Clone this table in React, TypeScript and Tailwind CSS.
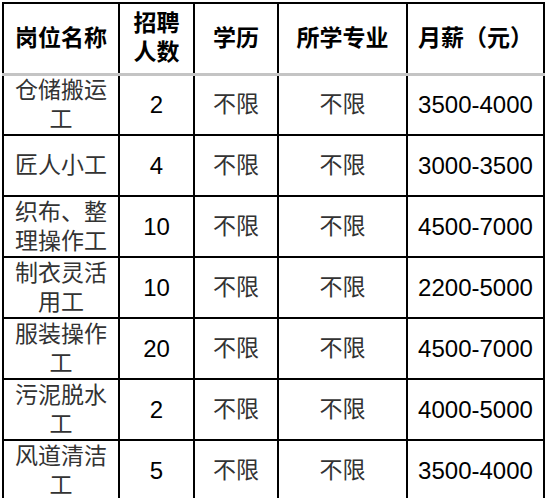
const rows = [
  { name: "仓储搬运工", count: "2", salary: "3500-4000" },
  { name: "匠人小工", count: "4", salary: "3000-3500" },
  { name: "织布、整理操作工", count: "10", salary: "4500-7000" },
  { name: "制衣灵活用工", count: "10", salary: "2200-5000" },
  { name: "服装操作工", count: "20", salary: "4500-7000" },
  { name: "污泥脱水工", count: "2", salary: "4000-5000" },
  { name: "风道清洁工", count: "5", salary: "3500-4000" },
];

const cell = "border-2 border-black text-center align-middle";

export default function App() {
  return (
    <div className="w-[548px] h-[498px] overflow-hidden bg-white pt-[2px] pl-[2px] font-['Liberation_Sans','Noto_Sans_CJK_SC',sans-serif] text-[23px] leading-[29px]">
      <table className="table-fixed border-collapse w-[541px]">
        <colgroup>
          <col className="w-[116px]" />
          <col className="w-[75px]" />
          <col className="w-[84px]" />
          <col className="w-[129px]" />
          <col className="w-[137px]" />
        </colgroup>
        <thead>
          <tr className="h-[71px] font-bold text-black">
            <th className={`${cell} border-b-[3px] border-b-[#c4c4c4] px-1`}>岗位名称</th>
            <th className={`${cell} border-b-[3px] border-b-[#c4c4c4] px-2`}>招聘人数</th>
            <th className={`${cell} border-b-[3px] border-b-[#c4c4c4]`}>学历</th>
            <th className={`${cell} border-b-[3px] border-b-[#c4c4c4]`}>所学专业</th>
            <th className={`${cell} border-b-[3px] border-b-[#c4c4c4] px-0`}>月薪（元）</th>
          </tr>
        </thead>
        <tbody>
          {rows.map((r) => (
            <tr key={r.name} className="h-[61px]">
              <td className={`${cell} px-1 text-[#333]`}>{r.name}</td>
              <td className={`${cell} text-black text-[24px]`}>{r.count}</td>
              <td className={`${cell} text-[#333]`}>不限</td>
              <td className={`${cell} text-[#333]`}>不限</td>
              <td className={`${cell} text-black text-[24px]`}>{r.salary}</td>
            </tr>
          ))}
        </tbody>
      </table>
    </div>
  );
}
